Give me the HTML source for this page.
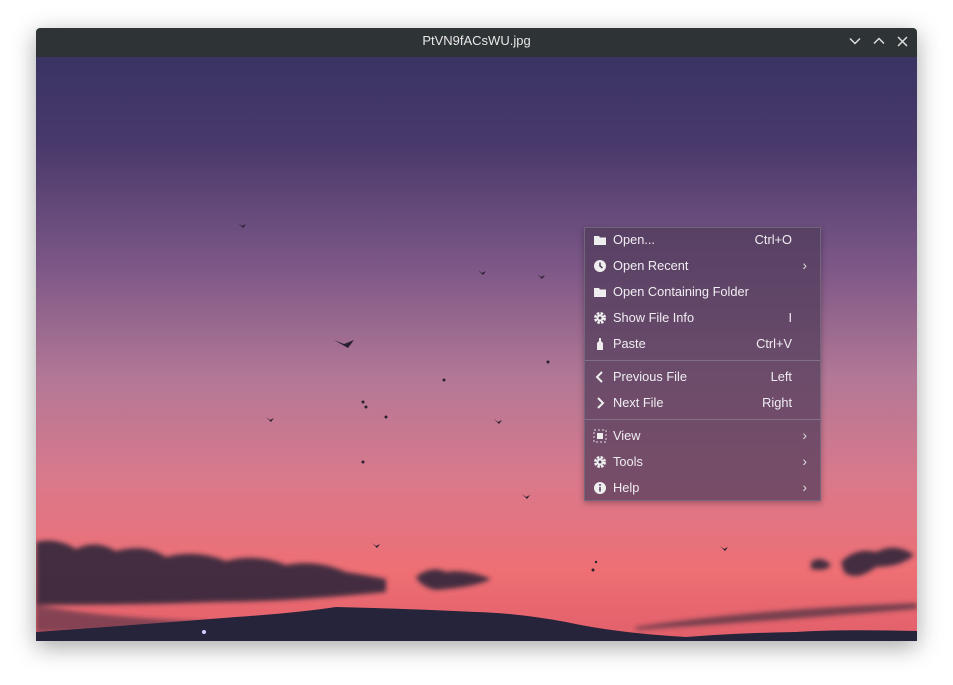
<!DOCTYPE html>
<html><head><meta charset="utf-8"><style>
body{margin:0;width:953px;height:685px;background:#fff;position:relative;overflow:hidden;font-family:"Liberation Sans",sans-serif}
.win{position:absolute;left:36px;top:28px;width:881px;height:613px;box-shadow:0 6px 22px rgba(0,0,0,.35)}
.tb{height:29px;background:#2e3336;color:#e8e8e8;font-size:13px;text-align:center;line-height:26px;border-radius:4px 4px 0 0}
.img{position:absolute;left:0;top:29px;width:881px;height:584px}
.menu{position:absolute;left:584px;top:227px;width:235px;height:272px;background:rgba(80,60,90,.72);border:1px solid rgba(120,110,130,.8);box-shadow:0 2px 6px rgba(0,0,0,.3);color:#f0eef2;font-size:12.8px;backdrop-filter:blur(8px)}
.it{position:absolute;left:0;right:0;height:26px;line-height:23px}
.it .l{position:absolute;left:28px}
.it .r{position:absolute;right:28px}
.it .a{position:absolute;right:13px;font-size:14px;color:#ddd}
.it svg{position:absolute;left:8px;top:5px}
.sep{position:absolute;left:0;right:0;height:1px;background:rgba(140,130,145,.7)}
</style></head><body>
<div class="win">
<div class="tb">PtVN9fACsWU.jpg
<svg style="position:absolute;right:56px;top:9px" width="12" height="8"><path d="M1 1.5L6 6.5L11 1.5" stroke="#ddd" stroke-width="1.5" fill="none"/></svg>
<svg style="position:absolute;right:32px;top:9px" width="12" height="8"><path d="M1 6.5L6 1.5L11 6.5" stroke="#ddd" stroke-width="1.5" fill="none"/></svg>
<svg style="position:absolute;right:9px;top:8px" width="11" height="11"><path d="M1 1L10 10M10 1L1 10" stroke="#ddd" stroke-width="1.5"/></svg>
</div>
<svg class="img" viewBox="0 0 881 584" preserveAspectRatio="none">
<defs><linearGradient id="g" x1="0" y1="0" x2="0" y2="1">
<stop offset="0" stop-color="#393463"/><stop offset=".15" stop-color="#49396b"/><stop offset=".35" stop-color="#7a5686"/><stop offset=".55" stop-color="#b37896"/><stop offset=".72" stop-color="#d9798c"/><stop offset=".88" stop-color="#ee6f74"/><stop offset="1" stop-color="#e25f6a"/></linearGradient>
<filter id="b"><feGaussianBlur stdDeviation="2.5"/></filter></defs>
<rect width="881" height="584" fill="url(#g)"/>
<g filter="url(#b)" fill="#33283a" opacity=".9">
<path d="M0 485 Q20 480 40 492 Q60 482 80 494 Q110 486 130 500 Q160 492 190 504 Q220 496 250 508 Q280 502 310 515 Q330 518 350 522 L350 535 Q250 545 180 545 Q100 548 0 548Z"/>
<path d="M380 520 Q395 508 410 515 Q430 512 455 522 Q440 530 400 533 Q385 530 380 520Z"/>
<path d="M0 548 Q60 560 180 565 L180 575 L0 575Z" opacity=".6"/>
<path d="M775 505 Q785 498 795 508 Q790 515 775 512Z"/>
<path d="M805 505 Q820 490 840 495 Q860 485 878 498 Q865 510 840 510 Q820 525 808 515Z"/>
<path d="M600 570 Q720 552 881 546 L881 552 Q720 565 600 573Z" opacity=".7"/>
</g>
<path d="M0 575 Q100 568 200 560 Q260 556 300 550 Q380 552 440 555 Q480 556 530 565 Q580 576 650 580 Q700 576 760 575 Q800 572 881 574 L881 584 L0 584Z" fill="#25243a"/>
<g fill="#2a2030">
<path d="M298 283 l10 4 l10 -4 l-6 8z"/>
<path d="M202 166l4 3 4-2-3 4z"/><path d="M442 213l4 3 4-2-3 4z"/><path d="M501 217l4 3 4-2-3 4z"/><path d="M230 360l4 3 4-2-3 4z"/><path d="M458 362l4 3 4-2-3 4z"/><path d="M486 437l4 3 4-2-3 4z"/><path d="M336 486l4 3 4-2-3 4z"/><path d="M684 489l4 3 4-2-3 4z"/>
<circle cx="327" cy="345" r="1.5"/><circle cx="330" cy="350" r="1.5"/><circle cx="350" cy="360" r="1.5"/><circle cx="327" cy="405" r="1.5"/><circle cx="408" cy="323" r="1.5"/><circle cx="512" cy="305" r="1.5"/><circle cx="557" cy="513" r="1.5"/><circle cx="560" cy="505" r="1.2"/>
</g>
<circle cx="168" cy="575" r="2" fill="#cfd0ff"/>
</svg>
</div>
<div class="menu">
<div class="it" style="top:0"><svg width="14" height="14"><path d="M1 3h5l1 1.5h6v7.5h-12z" fill="#eee"/></svg><span class="l">Open...</span><span class="r">Ctrl+O</span></div>
<div class="it" style="top:26px"><svg width="14" height="14"><circle cx="7" cy="7" r="6" fill="#eee"/><path d="M7 3.5V7l2.5 2" stroke="#4f3c58" stroke-width="1.5" fill="none"/></svg><span class="l">Open Recent</span><span class="a">›</span></div>
<div class="it" style="top:52px"><svg width="14" height="14"><path d="M1 3h5l1 1.5h6v7.5h-12z" fill="#eee"/></svg><span class="l">Open Containing Folder</span></div>
<div class="it" style="top:78px"><svg width="14" height="14"><circle cx="7" cy="7" r="4.5" fill="none" stroke="#eee" stroke-width="3" stroke-dasharray="2.4 1.2"/><circle cx="7" cy="7" r="3.5" fill="#eee"/><circle cx="7" cy="7" r="1.5" fill="#5a4560"/></svg><span class="l">Show File Info</span><span class="r">I</span></div>
<div class="it" style="top:104px"><svg width="14" height="14"><path d="M6 1h2v3l2 2v7h-6v-7l2-2z" fill="#eee"/></svg><span class="l">Paste</span><span class="r">Ctrl+V</span></div>
<div class="sep" style="top:132px"></div>
<div class="it" style="top:137px"><svg width="14" height="14"><path d="M9 2L4 7l5 5" stroke="#eee" stroke-width="2" fill="none"/></svg><span class="l">Previous File</span><span class="r">Left</span></div>
<div class="it" style="top:163px"><svg width="14" height="14"><path d="M5 2l5 5-5 5" stroke="#eee" stroke-width="2" fill="none"/></svg><span class="l">Next File</span><span class="r">Right</span></div>
<div class="sep" style="top:191px"></div>
<div class="it" style="top:196px"><svg width="14" height="14"><rect x="1" y="1" width="12" height="12" fill="none" stroke="#ddd" stroke-dasharray="2 2"/><rect x="4" y="4" width="6" height="6" fill="#eee"/></svg><span class="l">View</span><span class="a">›</span></div>
<div class="it" style="top:222px"><svg width="14" height="14"><circle cx="7" cy="7" r="4.5" fill="none" stroke="#eee" stroke-width="3" stroke-dasharray="2.4 1.2"/><circle cx="7" cy="7" r="3.5" fill="#eee"/><circle cx="7" cy="7" r="1.5" fill="#5a4560"/></svg><span class="l">Tools</span><span class="a">›</span></div>
<div class="it" style="top:248px"><svg width="14" height="14"><circle cx="7" cy="7" r="6" fill="#eee"/><rect x="6.2" y="6" width="1.6" height="4.5" fill="#5a4560"/><circle cx="7" cy="4" r="1" fill="#5a4560"/></svg><span class="l">Help</span><span class="a">›</span></div>
</div>
</body></html>
